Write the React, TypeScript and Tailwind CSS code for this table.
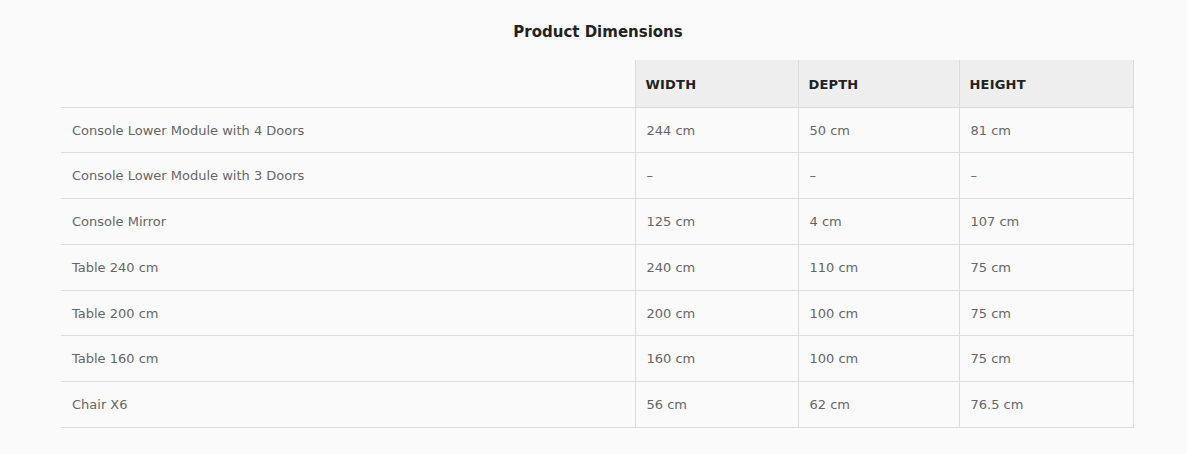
import React from "react";

const rows: [string, string, string, string][] = [
  ["Console Lower Module with 4 Doors", "244 cm", "50 cm", "81 cm"],
  ["Console Lower Module with 3 Doors", "–", "–", "–"],
  ["Console Mirror", "125 cm", "4 cm", "107 cm"],
  ["Table 240 cm", "240 cm", "110 cm", "75 cm"],
  ["Table 200 cm", "200 cm", "100 cm", "75 cm"],
  ["Table 160 cm", "160 cm", "100 cm", "75 cm"],
  ["Chair X6", "56 cm", "62 cm", "76.5 cm"],
];

export default function App() {
  return (
    <div
      className="w-[1187px] h-[454px] bg-[#fafafa] overflow-hidden"
      style={{ fontFamily: '"DejaVu Sans", sans-serif' }}
    >
      <div className="ml-[61px] w-[1072px] pt-[21px]">
        <h2 className="text-center text-[15px] font-semibold text-[#222] leading-[22px] h-[39px] pl-[2px]">
          Product Dimensions
        </h2>
        <table className="w-[1072px] table-fixed border-collapse">
          <colgroup>
            <col className="w-[574px]" />
            <col className="w-[163px]" />
            <col className="w-[161px]" />
            <col className="w-[174px]" />
          </colgroup>
          <thead>
            <tr className="h-[47px]">
              <th className="border-b border-[#dcdcdc]"></th>
              {["WIDTH", "DEPTH", "HEIGHT"].map((h) => (
                <th
                  key={h}
                  className="bg-[#eeeeee] border-l border-r border-b border-[#dcdcdc] text-left pl-[10px] pt-[2px] text-[13px] font-bold text-[#222] tracking-[0.2px]"
                >
                  {h}
                </th>
              ))}
            </tr>
          </thead>
          <tbody>
            {rows.map((r, i) => (
              <tr key={i} className="h-[45.75px]">
                <td className="border-b border-[#dcdcdc] pl-[11px] pt-[1px] text-[13px] text-[#666]">
                  {r[0]}
                </td>
                {r.slice(1).map((c, j) => (
                  <td
                    key={j}
                    className="border-l border-r border-b border-[#dcdcdc] pl-[11px] pt-[1px] text-[13px] text-[#666]"
                  >
                    {c}
                  </td>
                ))}
              </tr>
            ))}
          </tbody>
        </table>
      </div>
    </div>
  );
}
